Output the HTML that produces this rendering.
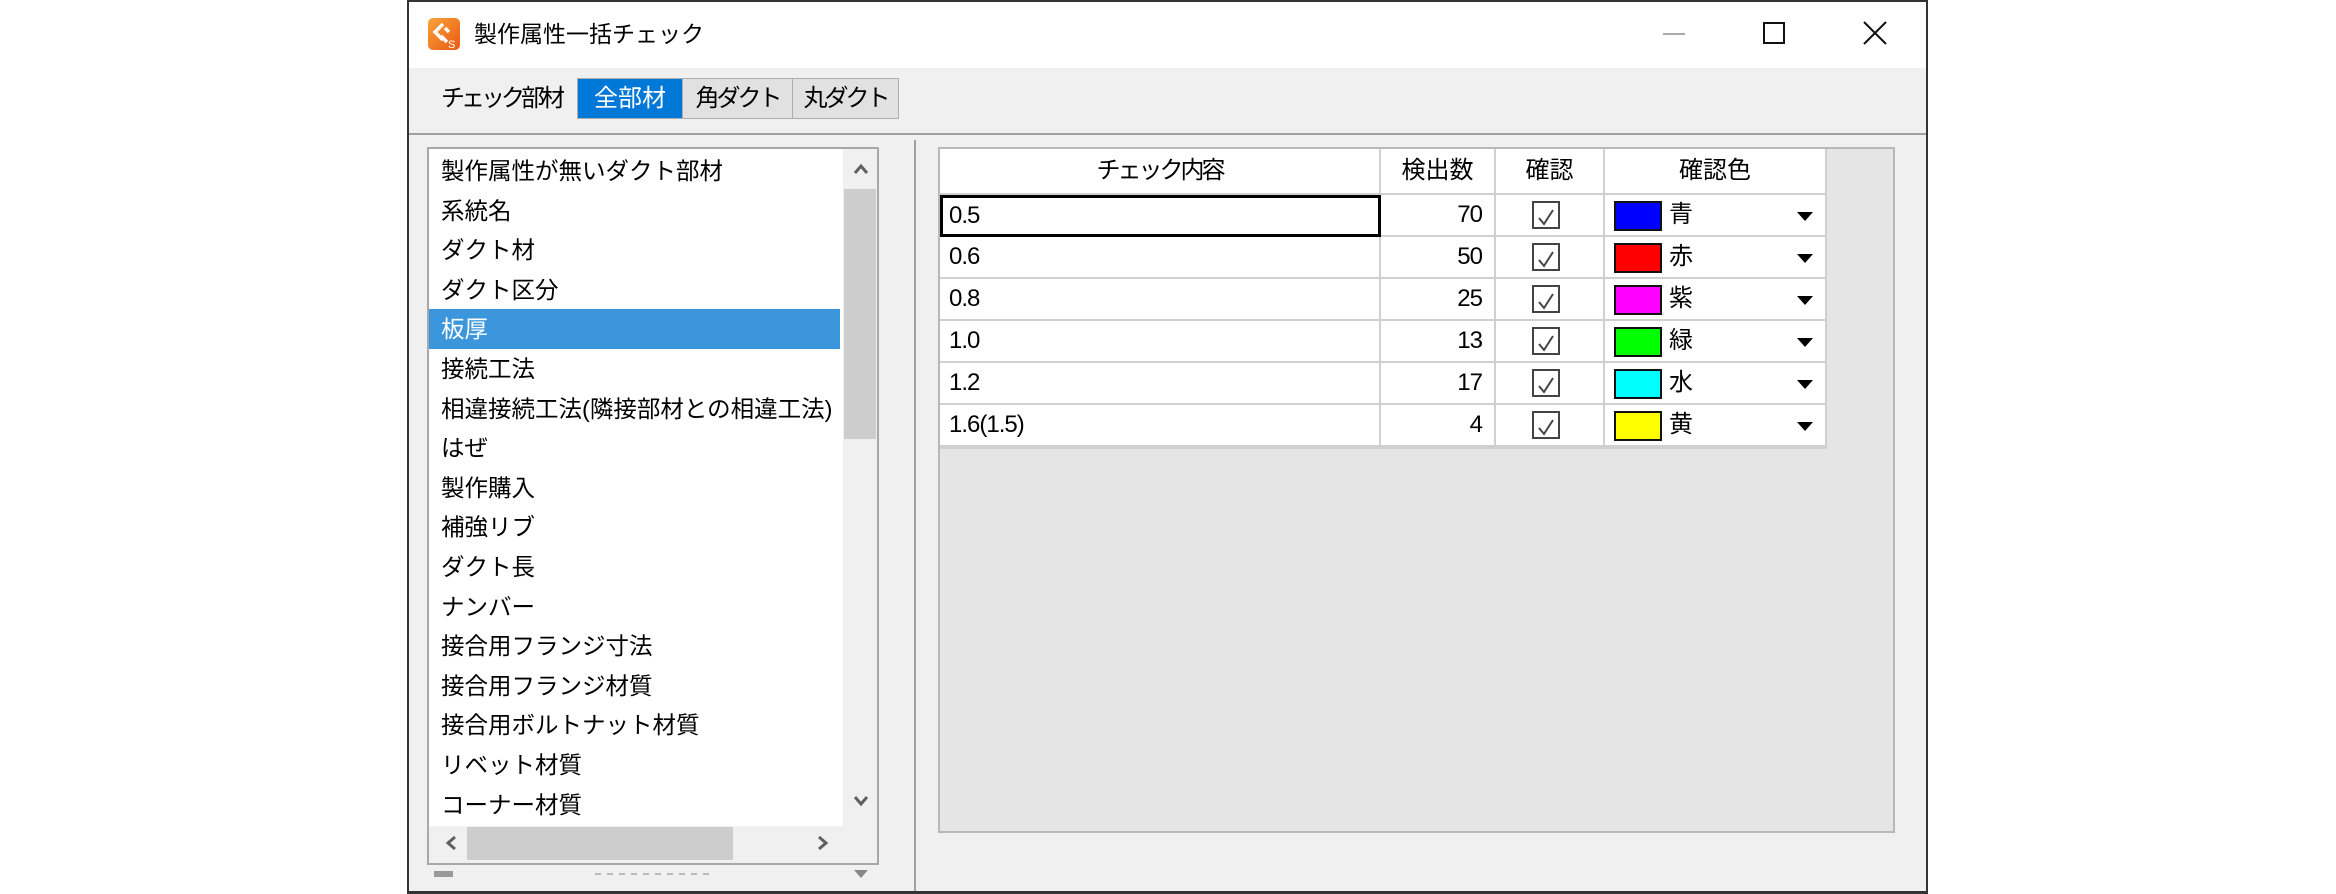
<!DOCTYPE html>
<html><head><meta charset="utf-8"><style>
*{margin:0;padding:0;box-sizing:border-box}
body{width:2336px;height:894px;background:#fff;position:relative;overflow:hidden;font-family:"Liberation Sans","Noto Sans CJK JP",sans-serif;color:#000}
.a{position:absolute}
.win{left:407px;top:0;width:1521px;height:894px;border:2px solid #333;border-bottom:3px solid #333;background:#f0f0f0}
.t{font-size:24px;line-height:24px;white-space:nowrap}
.li{position:absolute;left:0;width:411px;height:40px;padding-left:12px;font-size:23.5px;line-height:40px;white-space:nowrap;overflow:hidden}
.cell{position:absolute;height:42px;border-right:2px solid #d0d0d0;border-bottom:2px solid #d0d0d0;background:#fff;font-size:24px;line-height:40px}
.cb{position:absolute;width:28px;height:28px;border:2px solid #444;background:#fff}
.sw{position:absolute;width:48px;height:30px;border:2px solid #111}
.dd{position:absolute;width:0;height:0;border-left:8px solid transparent;border-right:8px solid transparent;border-top:9px solid #000}
.n{letter-spacing:-1px}
</style></head><body>
<div class="a win"></div>
<div class="a" style="left:409px;top:2px;width:1517px;height:66px;background:#fff"></div>
<div class="a" style="left:428px;top:18px;width:32px;height:32px;border-radius:5px;background:linear-gradient(135deg,#f7a23a,#ea5a12)">
<svg width="32" height="32" viewBox="0 0 32 32"><path d="M15 6 L7 14 L15 22 M17 10 L21 14 M13 18 L19 24" stroke="#fff" stroke-width="3.5" fill="none"/><text x="20" y="30" font-size="11" fill="#fff" font-family="Liberation Sans">S</text></svg></div>
<div class="a t" style="left:474px;top:22px;font-size:23px">製作属性一括チェック</div>
<div class="a" style="left:1663px;top:33px;width:22px;height:2px;background:#aaa"></div>
<div class="a" style="left:1763px;top:22px;width:22px;height:22px;border:2px solid #111"></div>
<svg class="a" style="left:1863px;top:21px" width="24" height="24"><path d="M1 1L23 23M23 1L1 23" stroke="#111" stroke-width="2"/></svg>
<div class="a t" style="left:441px;top:87px;letter-spacing:-4px">チェック部材</div>
<div class="a" style="left:577px;top:78px;width:322px;height:41px;border:1px solid #adadad;background:#e1e1e1"></div>
<div class="a t" style="left:578px;top:79px;width:104px;height:39px;background:#0078d7;color:#fff;line-height:39px;text-align:center">全部材</div>
<div class="a t" style="left:682px;top:79px;width:110px;height:39px;border-left:1px solid #adadad;line-height:39px;text-align:center;letter-spacing:-3px">角ダクト</div>
<div class="a t" style="left:792px;top:79px;width:106px;height:39px;border-left:1px solid #adadad;line-height:39px;text-align:center;letter-spacing:-3px">丸ダクト</div>
<div class="a" style="left:409px;top:133px;width:1517px;height:2px;background:#a0a0a0"></div>
<div class="a" style="left:427px;top:147px;width:452px;height:718px;border:2px solid #a8a8a8;background:#fff;overflow:hidden">
 <div class="a" style="left:0;top:0;width:414px;height:677px">
  <div class="li" style="top:2px">製作属性が無いダクト部材</div>
  <div class="li" style="top:41.6px">系統名</div>
  <div class="li" style="top:81.2px">ダクト材</div>
  <div class="li" style="top:120.8px">ダクト区分</div>
  <div class="li" style="top:160.4px;background:#3c96dc;color:#fff">板厚</div>
  <div class="li" style="top:200px">接続工法</div>
  <div class="li" style="top:239.6px">相違接続工法(隣接部材との相違工法)</div>
  <div class="li" style="top:279.2px">はぜ</div>
  <div class="li" style="top:318.8px">製作購入</div>
  <div class="li" style="top:358.4px">補強リブ</div>
  <div class="li" style="top:398px">ダクト長</div>
  <div class="li" style="top:437.6px">ナンバー</div>
  <div class="li" style="top:477.2px">接合用フランジ寸法</div>
  <div class="li" style="top:516.8px">接合用フランジ材質</div>
  <div class="li" style="top:556.4px">接合用ボルトナット材質</div>
  <div class="li" style="top:596px">リベット材質</div>
  <div class="li" style="top:635.6px">コーナー材質</div>
 </div>
 <div class="a" style="left:414px;top:0;width:34px;height:677px;background:#f0f0f0"></div>
 <div class="a" style="left:415px;top:40px;width:32px;height:250px;background:#cdcdcd"></div>
 <svg class="a" style="left:424px;top:14px" width="16" height="12"><path d="M2 10L8 3L14 10" stroke="#606060" stroke-width="3" fill="none"/></svg>
 <svg class="a" style="left:424px;top:646px" width="16" height="12"><path d="M2 2L8 9L14 2" stroke="#606060" stroke-width="3" fill="none"/></svg>
 <div class="a" style="left:0;top:677px;width:448px;height:37px;background:#f0f0f0"></div>
 <div class="a" style="left:38px;top:678px;width:266px;height:33px;background:#cdcdcd"></div>
 <svg class="a" style="left:16px;top:686px" width="12" height="16"><path d="M10 2L3 8L10 14" stroke="#606060" stroke-width="3" fill="none"/></svg>
 <svg class="a" style="left:388px;top:686px" width="12" height="16"><path d="M2 2L9 8L2 14" stroke="#606060" stroke-width="3" fill="none"/></svg>
</div>
<div class="a" style="left:434px;top:871px;width:19px;height:6px;background:#999"></div>
<div class="a" style="left:595px;top:873px;width:114px;height:2px;background:repeating-linear-gradient(90deg,#bbb 0 6px,transparent 6px 12px)"></div>
<div class="dd" style="left:854px;top:870px;border-top-color:#888;border-left-width:7px;border-right-width:7px;border-top-width:8px"></div>
<div class="a" style="left:914px;top:140px;width:2px;height:751px;background:#a0a0a0"></div>
<div class="a" style="left:938px;top:147px;width:957px;height:686px;border:2px solid #b8b8b8;background:#e5e5e5"></div>
<div class="a" style="left:940px;top:149px;width:887px;height:300px;background:#d0d0d0"></div>
<div class="cell" style="left:940px;top:149px;width:441px;height:46px;text-align:center;line-height:44px;letter-spacing:-3px">チェック内容</div>
<div class="cell" style="left:1381px;top:149px;width:115px;height:46px;text-align:center;line-height:44px">検出数</div>
<div class="cell" style="left:1496px;top:149px;width:109px;height:46px;text-align:center;line-height:44px">確認</div>
<div class="cell" style="left:1605px;top:149px;width:222px;height:46px;text-align:center;line-height:44px">確認色</div>

<div class="cell n" style="left:940px;top:195px;width:441px;border:3px solid #000;padding-left:6px;line-height:36px">0.5</div>
<div class="cell n" style="left:1381px;top:195px;width:115px;text-align:right;padding-right:12px">70</div>
<div class="cell" style="left:1496px;top:195px;width:109px"><div class="cb" style="left:36px;top:6px"><svg width="24" height="24"><path d="M5 12L10 18L19 4" stroke="#444" stroke-width="2" fill="none"/></svg></div></div>
<div class="cell" style="left:1605px;top:195px;width:222px"><div class="sw" style="left:9px;top:6px;background:#00f"></div><span class="a" style="left:64px;top:0">青</span><div class="dd" style="left:192px;top:17px"></div></div>

<div class="cell n" style="left:940px;top:237px;width:441px;padding-left:9px">0.6</div>
<div class="cell n" style="left:1381px;top:237px;width:115px;text-align:right;padding-right:12px">50</div>
<div class="cell" style="left:1496px;top:237px;width:109px"><div class="cb" style="left:36px;top:6px"><svg width="24" height="24"><path d="M5 12L10 18L19 4" stroke="#444" stroke-width="2" fill="none"/></svg></div></div>
<div class="cell" style="left:1605px;top:237px;width:222px"><div class="sw" style="left:9px;top:6px;background:#f00"></div><span class="a" style="left:64px;top:0">赤</span><div class="dd" style="left:192px;top:17px"></div></div>

<div class="cell n" style="left:940px;top:279px;width:441px;padding-left:9px">0.8</div>
<div class="cell n" style="left:1381px;top:279px;width:115px;text-align:right;padding-right:12px">25</div>
<div class="cell" style="left:1496px;top:279px;width:109px"><div class="cb" style="left:36px;top:6px"><svg width="24" height="24"><path d="M5 12L10 18L19 4" stroke="#444" stroke-width="2" fill="none"/></svg></div></div>
<div class="cell" style="left:1605px;top:279px;width:222px"><div class="sw" style="left:9px;top:6px;background:#f0f"></div><span class="a" style="left:64px;top:0">紫</span><div class="dd" style="left:192px;top:17px"></div></div>

<div class="cell n" style="left:940px;top:321px;width:441px;padding-left:9px">1.0</div>
<div class="cell n" style="left:1381px;top:321px;width:115px;text-align:right;padding-right:12px">13</div>
<div class="cell" style="left:1496px;top:321px;width:109px"><div class="cb" style="left:36px;top:6px"><svg width="24" height="24"><path d="M5 12L10 18L19 4" stroke="#444" stroke-width="2" fill="none"/></svg></div></div>
<div class="cell" style="left:1605px;top:321px;width:222px"><div class="sw" style="left:9px;top:6px;background:#0f0"></div><span class="a" style="left:64px;top:0">緑</span><div class="dd" style="left:192px;top:17px"></div></div>

<div class="cell n" style="left:940px;top:363px;width:441px;padding-left:9px">1.2</div>
<div class="cell n" style="left:1381px;top:363px;width:115px;text-align:right;padding-right:12px">17</div>
<div class="cell" style="left:1496px;top:363px;width:109px"><div class="cb" style="left:36px;top:6px"><svg width="24" height="24"><path d="M5 12L10 18L19 4" stroke="#444" stroke-width="2" fill="none"/></svg></div></div>
<div class="cell" style="left:1605px;top:363px;width:222px"><div class="sw" style="left:9px;top:6px;background:#0ff"></div><span class="a" style="left:64px;top:0">水</span><div class="dd" style="left:192px;top:17px"></div></div>

<div class="cell n" style="left:940px;top:405px;width:441px;padding-left:9px">1.6(1.5)</div>
<div class="cell n" style="left:1381px;top:405px;width:115px;text-align:right;padding-right:12px">4</div>
<div class="cell" style="left:1496px;top:405px;width:109px"><div class="cb" style="left:36px;top:6px"><svg width="24" height="24"><path d="M5 12L10 18L19 4" stroke="#444" stroke-width="2" fill="none"/></svg></div></div>
<div class="cell" style="left:1605px;top:405px;width:222px"><div class="sw" style="left:9px;top:6px;background:#ff0"></div><span class="a" style="left:64px;top:0">黄</span><div class="dd" style="left:192px;top:17px"></div></div>
</body></html>
